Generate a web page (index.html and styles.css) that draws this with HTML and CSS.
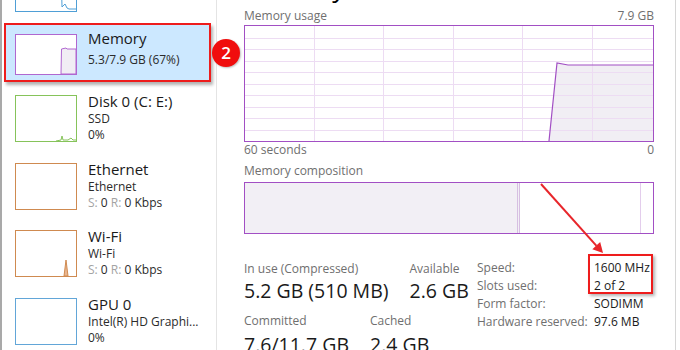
FILE: index.html
```html
<!DOCTYPE html>
<html lang="en">
<head>
    <meta charset="UTF-8">
    <title>Task Manager - Memory</title>
    <link rel="stylesheet" href="styles.css">
</head>
<body>
<div class="screen">
    <div class="window">
        <div class="sidebar">
            <div class="item partial">
                <div class="thumb thumb-cpu">
                    <svg viewBox="0 0 60 45" preserveAspectRatio="none">
                        <polyline points="45,0 46,41 49,38 51,42 53,43 60,43" fill="none" stroke="#4f9fd6" stroke-width="1"/>
                    </svg>
                </div>
                <div class="item-text">
                    <div class="item-title">CPU</div>
                    <div class="item-sub">9%&nbsp;&nbsp;1.60 GHz</div>
                </div>
            </div>

            <div class="item selected">
                <div class="thumb thumb-mem">
                    <svg viewBox="0 0 60 39" preserveAspectRatio="none">
                        <polygon points="45,39 45.5,14 50,13 51,14 60,14 60,39" fill="#f1edf4" stroke="#b067d0" stroke-width="1"/>
                    </svg>
                </div>
                <div class="item-text">
                    <div class="item-title">Memory</div>
                    <div class="item-sub">5.3/7.9 GB (67%)</div>
                </div>
            </div>

            <div class="item">
                <div class="thumb thumb-disk">
                    <svg viewBox="0 0 60 45" preserveAspectRatio="none">
                        <polyline points="40,45 45,44 46,40 47,44 52,44 55,42 57,44 60,44" fill="none" stroke="#86c35a" stroke-width="1"/>
                    </svg>
                </div>
                <div class="item-text">
                    <div class="item-title">Disk 0 (C: E:)</div>
                    <div class="item-sub">SSD</div>
                    <div class="item-sub">0%</div>
                </div>
            </div>

            <div class="item">
                <div class="thumb thumb-net"></div>
                <div class="item-text">
                    <div class="item-title">Ethernet</div>
                    <div class="item-sub">Ethernet</div>
                    <div class="item-sub"><span class="dim">S:</span> 0 <span class="dim">R:</span> 0 Kbps</div>
                </div>
            </div>

            <div class="item">
                <div class="thumb thumb-net">
                    <svg viewBox="0 0 60 45" preserveAspectRatio="none">
                        <polygon points="48,45 50,29 52,45" fill="#e9b58e" stroke="#cf8a50" stroke-width="1"/>
                    </svg>
                </div>
                <div class="item-text">
                    <div class="item-title">Wi-Fi</div>
                    <div class="item-sub">Wi-Fi</div>
                    <div class="item-sub"><span class="dim">S:</span> 0 <span class="dim">R:</span> 0 Kbps</div>
                </div>
            </div>

            <div class="item">
                <div class="thumb thumb-gpu"></div>
                <div class="item-text">
                    <div class="item-title">GPU 0</div>
                    <div class="item-sub">Intel(R) HD Graphi...</div>
                    <div class="item-sub">0%</div>
                </div>
            </div>
        </div>

        <div class="panel">
            <div class="heading">Memory</div>

            <div class="graph-head">
                <span>Memory usage</span>
                <span>7.9 GB</span>
            </div>
            <div class="usage-graph">
                <svg viewBox="0 0 408 115" preserveAspectRatio="none">
                    <polygon points="304,115 312,37 323,39 408,39 408,115" fill="#f1eef4"/>
                    <g stroke="#eddcf3" stroke-width="1">
                        <line x1="69.5" y1="0" x2="69.5" y2="115"/>
                        <line x1="138.5" y1="0" x2="138.5" y2="115"/>
                        <line x1="208.5" y1="0" x2="208.5" y2="115"/>
                        <line x1="277.5" y1="0" x2="277.5" y2="115"/>
                        <line x1="347.5" y1="0" x2="347.5" y2="115"/>
                        <line x1="0" y1="12.5" x2="408" y2="12.5"/>
                        <line x1="0" y1="23.5" x2="408" y2="23.5"/>
                        <line x1="0" y1="35.5" x2="408" y2="35.5"/>
                        <line x1="0" y1="46.5" x2="408" y2="46.5"/>
                        <line x1="0" y1="58.5" x2="408" y2="58.5"/>
                        <line x1="0" y1="69.5" x2="408" y2="69.5"/>
                        <line x1="0" y1="81.5" x2="408" y2="81.5"/>
                        <line x1="0" y1="92.5" x2="408" y2="92.5"/>
                        <line x1="0" y1="104.5" x2="408" y2="104.5"/>
                    </g>
                    <polyline points="304,115 312,37 323,39 408,39" fill="none" stroke="#a24fc4" stroke-width="1.2"/>
                </svg>
            </div>
            <div class="graph-head">
                <span>60 seconds</span>
                <span>0</span>
            </div>

            <div class="graph-head spaced">
                <span>Memory composition</span>
            </div>
            <div class="composition">
                <div class="seg seg-inuse"></div>
                <div class="seg seg-modified"></div>
                <div class="seg seg-standby"></div>
                <div class="seg seg-free"></div>
            </div>

            <div class="stats">
                <div class="stats-left">
                    <div class="stats-row">
                        <div class="stat">
                            <div class="stat-label">In use (Compressed)</div>
                            <div class="stat-value">5.2 GB (510 MB)</div>
                        </div>
                        <div class="stat">
                            <div class="stat-label">Available</div>
                            <div class="stat-value">2.6 GB</div>
                        </div>
                    </div>
                    <div class="stats-row second">
                        <div class="stat">
                            <div class="stat-label">Committed</div>
                            <div class="stat-value">7.6/11.7 GB</div>
                        </div>
                        <div class="stat">
                            <div class="stat-label">Cached</div>
                            <div class="stat-value">2.4 GB</div>
                        </div>
                    </div>
                </div>
                <dl class="specs">
                    <dt>Speed:</dt><dd>1600 MHz</dd>
                    <dt>Slots used:</dt><dd>2 of 2</dd>
                    <dt>Form factor:</dt><dd>SODIMM</dd>
                    <dt>Hardware reserved:</dt><dd>97.6 MB</dd>
                </dl>
            </div>
        </div>
    </div>

    <!-- annotations -->
    <div class="badge">2</div>
    <svg class="arrow" viewBox="0 0 80 85">
        <line x1="11" y1="9" x2="66.5" y2="70.8" stroke="#e8262b" stroke-width="2"/>
        <polygon points="73,78 62.3,74.2 70.2,67" fill="#e8262b"/>
    </svg>
    <div class="callout"></div>
</div>
</body>
</html>
```

FILE: styles.css
```css
body {
    margin: 0;
    background-color: #fff;
    font-family: "Open Sans", "Noto Sans", sans-serif;
    color: #1a1a1a;
}
.screen {
    position: relative;
    width: 680px;
    height: 350px;
    overflow: hidden;
}
.window {
    display: flex;
    height: 350px;
    border-left: 2px solid #a9a9a9;
}

/* left list */
.sidebar {
    width: 214px;
    flex: none;
    border-right: 1px solid #e4e4e4;
}
.item {
    display: flex;
    gap: 11px;
    height: 67.5px;
    box-sizing: border-box;
    padding: 6px 0 0 13px;
}
.item.partial {
    margin-top: -45.5px;
}
.item.partial .item-text {
    padding-top: 7px;
}
.item.selected {
    height: 59px;
    margin: 1px 5px 3px 2px;
    padding: 3px 0 0 9px;
    border: 2px solid #ee1c1c;
    background-color: #cce8ff;
    box-shadow: 2px 3px 3px rgba(0,0,0,0.3);
}
.thumb {
    flex: none;
    width: 62px;
    height: 47px;
    margin-top: 4px;
    box-sizing: border-box;
    border: 1px solid;
    background-color: #fff;
}
.thumb svg {
    display: block;
    width: 100%;
    height: 100%;
}
.thumb-cpu { border-color: #4f9fd6; }
.thumb-mem {
    height: 41px;
    margin-top: 6px;
    border-color: #b067d0;
}
.thumb-disk { border-color: #86c35a; }
.thumb-net { border-color: #cf8a50; }
.thumb-gpu { border-color: #62a6d8; }
.item-title {
    font-size: 15px;
    line-height: 20px;
    color: #1a1a1a;
    white-space: nowrap;
}
.selected .item-title {
    margin-bottom: 3.5px;
}
.item-sub {
    font-size: 12px;
    line-height: 16px;
    color: #2b2b2b;
    white-space: nowrap;
}
.dim {
    color: #a3a3a3;
}

/* right panel */
.panel {
    flex: none;
    width: 410px;
    padding: 0 21px 0 27px;
    border-right: 1px solid #d6d6d6;
}
.heading {
    font-size: 26px;
    line-height: 32px;
    margin: -29px 0 5px;
    color: #000;
}
.graph-head {
    display: flex;
    justify-content: space-between;
    font-size: 12px;
    line-height: 16px;
    color: #6f6f6f;
}
.graph-head.spaced {
    margin-top: 5px;
}
.usage-graph {
    height: 117px;
    margin-top: 1px;
    box-sizing: border-box;
    border: 1px solid #a24fc4;
}
.usage-graph svg {
    display: block;
    width: 100%;
    height: 100%;
}
.composition {
    display: flex;
    height: 52px;
    margin-top: 3px;
    box-sizing: border-box;
    border: 1px solid #a24fc4;
}
.seg-inuse {
    width: 272px;
    background-color: #f2eff5;
    border-right: 1px solid #d7bfe2;
}
.seg-modified {
    width: 1px;
    background-color: #f2eff5;
    border-right: 1px solid #d7bfe2;
}
.seg-standby {
    flex: 1;
    border-right: 1px solid #e3cdec;
}
.seg-free {
    width: 12px;
}

.stats {
    display: flex;
    margin-top: 26px;
}
.stats-left {
    flex: none;
    width: 233px;
}
.stats-row {
    display: flex;
    gap: 21px;
}
.stats-row.second {
    margin-top: 8px;
}
.stats-row.second .stat-value {
    padding-top: 2px;
}
.stat-label {
    font-size: 12px;
    line-height: 17px;
    color: #6f6f6f;
}
.stat-value {
    font-size: 19.5px;
    line-height: 27px;
    color: #1a1a1a;
    white-space: nowrap;
}
.specs {
    display: grid;
    grid-template-columns: 117px auto;
    grid-auto-rows: 18.3px;
    margin: -1.5px 0 0;
    font-size: 12px;
    line-height: 18.3px;
}
.specs dt {
    color: #6f6f6f;
    white-space: nowrap;
}
.specs dd {
    margin: 0;
    color: #1a1a1a;
    white-space: nowrap;
}

/* annotation overlays */
.badge {
    position: absolute;
    left: 212px;
    top: 39px;
    width: 28px;
    height: 28px;
    border-radius: 50%;
    background-color: #f00d0d;
    color: #fff;
    font-size: 17px;
    font-weight: 600;
    line-height: 28px;
    text-align: center;
    box-shadow: 1px 1px 2px rgba(0,0,0,0.25);
}
.arrow {
    position: absolute;
    left: 530px;
    top: 175px;
    width: 80px;
    height: 85px;
}
.callout {
    position: absolute;
    left: 588px;
    top: 254px;
    width: 65px;
    height: 40px;
    box-sizing: border-box;
    border: 2px solid #ee1c1c;
    box-shadow: 2px 2px 3px rgba(0,0,0,0.3);
}
```
